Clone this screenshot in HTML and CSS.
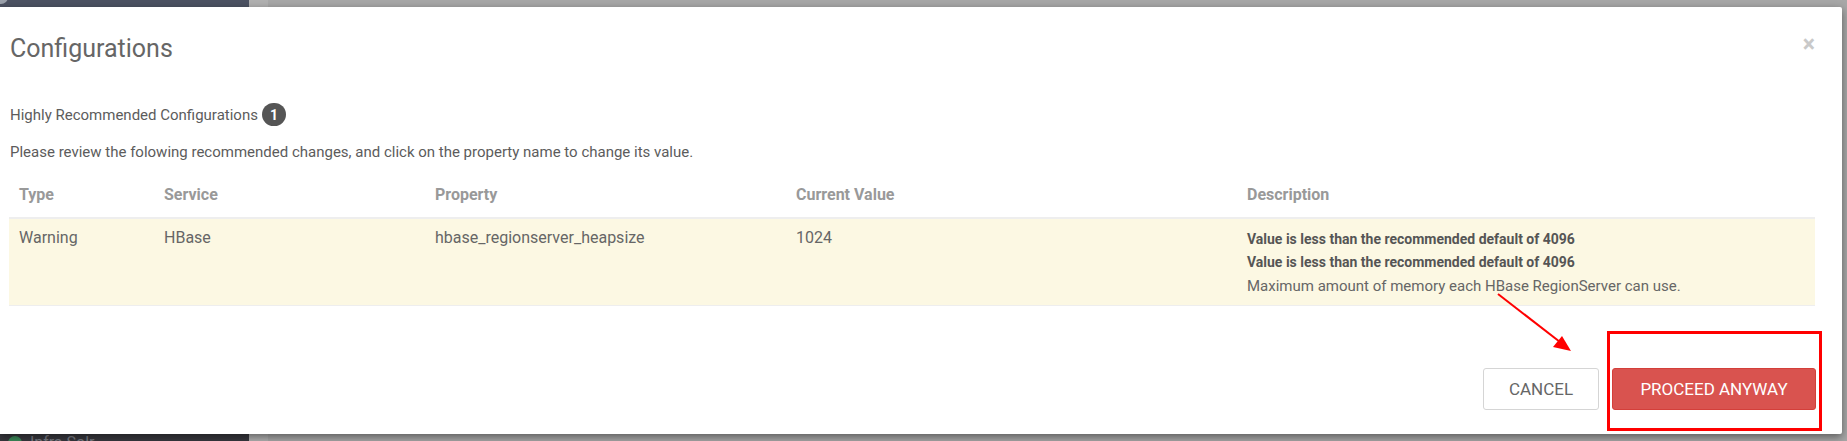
FILE: index.html
```html
<!DOCTYPE html>
<html>
<head>
<meta charset="utf-8">
<link rel="stylesheet" href="styles.css">
</head>
<body>
<div class="backdrop">
  <div class="sidebar">
    <div class="side-top"><span class="dot dot-top"></span></div>
    <div class="side-item"><span class="dot dot-green"></span><span class="side-label">Infra Solr</span></div>
  </div>
  <div class="content"></div>
</div>

<div class="modal">
  <div class="modal-header">
    <h4 class="modal-title">Configurations</h4>
    <span class="close">&times;</span>
  </div>
  <div class="modal-body">
    <div class="section-title">Highly Recommended Configurations <span class="badge">1</span></div>
    <p class="intro">Please review the folowing recommended changes, and click on the property name to change its value.</p>
    <table class="cfg-table">
      <colgroup>
        <col class="c1"><col class="c2"><col class="c3"><col class="c4"><col class="c5">
      </colgroup>
      <thead>
        <tr><th>Type</th><th>Service</th><th>Property</th><th>Current Value</th><th>Description</th></tr>
      </thead>
      <tbody>
        <tr class="warning">
          <td>Warning</td>
          <td>HBase</td>
          <td>hbase_regionserver_heapsize</td>
          <td>1024</td>
          <td>
            <div class="desc-strong">Value is less than the recommended default of 4096</div>
            <div class="desc-strong">Value is less than the recommended default of 4096</div>
            <div class="desc-note">Maximum amount of memory each HBase RegionServer can use.</div>
          </td>
        </tr>
      </tbody>
    </table>
  </div>
  <div class="modal-footer">
    <button class="btn btn-default">CANCEL</button>
    <button class="btn btn-danger">PROCEED ANYWAY</button>
  </div>
</div>

<svg class="annot" width="1847" height="441" viewBox="0 0 1847 441">
  <line x1="1498" y1="294" x2="1560" y2="342" stroke="#ff0000" stroke-width="2"/>
  <polygon points="1571,351 1553,347 1562,336" fill="#ff0000"/>
  <rect x="1608.5" y="332.5" width="212" height="97" fill="none" stroke="#ff0000" stroke-width="3"/>
</svg>
</body>
</html>
```
FILE: styles.css
```css
* { box-sizing: border-box; }
html, body {
  margin: 0;
  padding: 0;
  width: 1847px;
  height: 441px;
  overflow: hidden;
  font-family: Roboto, "Liberation Sans", sans-serif;
}
body { position: relative; }

.backdrop {
  display: grid;
  grid-template-columns: 249px 1fr;
  height: 441px;
}
.sidebar {
  background: #3e4049;
  display: flex;
  flex-direction: column;
  justify-content: space-between;
  overflow: hidden;
}
.side-top {
  height: 7px;
  background: #4c5262;
  position: relative;
  overflow: hidden;
}
.dot-top {
  position: absolute;
  left: -6px;
  top: -10px;
  width: 14px;
  height: 14px;
  border-radius: 50%;
  background: #9aa0aa;
}
.side-item {
  height: 7px;
  display: flex;
  align-items: flex-start;
  gap: 8px;
  padding-left: 8px;
  overflow: hidden;
  background: #38383e;
}
.dot-green {
  display: block;
  width: 14px;
  height: 14px;
  margin-top: 2px;
  border-radius: 50%;
  background: #3c8a5a;
}
.side-label {
  font-size: 16px;
  line-height: 16px;
  color: #7a7c84;
  margin-top: 1px;
}
.content {
  background: linear-gradient(to right, #b0b0b0 0, #b0b0b0 19px, #a7a7a7 19px);
}

.modal {
  position: absolute;
  left: 0;
  top: 7px;
  width: 1842px;
  height: 427px;
  background: #fff;
  border-radius: 0 2px 2px 0;
  box-shadow: 0 3px 9px rgba(0, 0, 0, 0.45);
  color: #666;
}

.modal-header {
  position: relative;
  padding: 25px 10px 0;
}
.modal-title {
  margin: 0;
  font-size: 25px;
  line-height: 34px;
  font-weight: 400;
  color: #666;
}
.close {
  position: absolute;
  right: 27px;
  top: 23px;
  font-size: 23px;
  font-weight: 700;
  line-height: 30px;
  color: #c9c9c9;
}

.modal-body {
  padding: 37px 9px 0;
}
.section-title {
  font-size: 15px;
  line-height: 20px;
  color: #5c5c5c;
  padding-left: 1px;
  display: flex;
  align-items: center;
  gap: 4px;
}
.badge {
  display: inline-flex;
  align-items: center;
  justify-content: center;
  width: 24px;
  height: 23px;
  border-radius: 12px;
  background: #555;
  color: #fff;
  font-weight: 700;
  font-size: 14px;
}
.intro {
  margin: 16px 0 0 1px;
  font-size: 15px;
  line-height: 20px;
  color: #5c5c5c;
}

.cfg-table {
  margin-top: 12px;
  width: 1806px;
  border-collapse: collapse;
  table-layout: fixed;
  font-size: 16px;
}
.c1 { width: 145px; }
.c2 { width: 271px; }
.c3 { width: 361px; }
.c4 { width: 451px; }
.c5 { width: 578px; }

.cfg-table th {
  text-align: left;
  font-weight: 700;
  color: #999;
  padding: 10px 10px 11px;
  line-height: 22px;
  border-bottom: 2px solid #eeeeee;
}
.cfg-table td {
  vertical-align: top;
  padding: 8px 10px 7px;
  line-height: 22px;
  color: #666;
  border-bottom: 1px solid #eeeeee;
}
.warning td { background: #fcf8e3; }
.desc-strong {
  font-size: 14px;
  font-weight: 700;
  color: #555;
  line-height: 23px;
}
.desc-strong:first-child { margin-top: 1px; }
.desc-note {
  font-size: 15px;
  line-height: 24px;
}

.modal-footer {
  position: absolute;
  right: 26px;
  bottom: 24px;
  display: flex;
  gap: 13px;
}
.btn {
  height: 42px;
  border-radius: 3px;
  font-family: Roboto, "Liberation Sans", sans-serif;
  font-size: 17px;
  padding: 0;
}
.btn-default {
  width: 116px;
  background: #fff;
  border: 1px solid #d5d5d5;
  color: #666;
}
.btn-danger {
  width: 204px;
  background: #d9534f;
  border: 1px solid #d43f3a;
  color: #fff;
}

.annot {
  position: absolute;
  left: 0;
  top: 0;
  pointer-events: none;
}
```
